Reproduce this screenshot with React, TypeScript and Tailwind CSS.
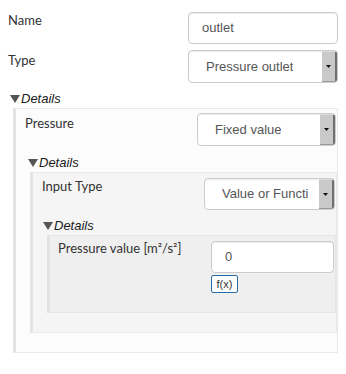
import React from 'react';

const Caret: React.FC = () => (
    <svg width="10" height="8" viewBox="0 0 10 8" className="shrink-0">
        <polygon points="0,0 10,0 5,8" fill="#555" />
    </svg>
);

const TextInput: React.FC<{ value: string; w: string }> = ({ value, w }) => (
    <div className={`${w} flex h-8 items-center rounded border border-[#ccc] bg-white pl-[13px] font-['Liberation_Sans',Arial,sans-serif] text-[13px] text-[#555] shadow-[inset_0_1px_1px_rgba(0,0,0,0.075)]`}>
        {value}
    </div>
);

const Select: React.FC<{ value: string; w: string; h: string }> = ({ value, w, h }) => (
    <div className={`${w} ${h} flex overflow-hidden rounded border border-[#ccc] bg-white font-['Liberation_Sans',Arial,sans-serif] text-[13px] text-[#555] shadow-[inset_0_1px_1px_rgba(0,0,0,0.075)]`}>
        <div className="flex min-w-0 flex-1 items-center pl-[17px] pr-[11px]">
            <div className="overflow-hidden whitespace-nowrap">{value}</div>
        </div>
        <div className="flex w-[15px] items-center justify-center border-r-2 border-b border-t border-r-[#6f6f6f] border-b-[#9a9a9a] border-t-[#dcdcdc] bg-[#c9c9c9]">
            <svg width="5" height="3" viewBox="0 0 5 3">
                <polygon points="0,0 5,0 2.5,3" fill="#111" />
            </svg>
        </div>
    </div>
);

const Header: React.FC = () => (
    <div className="flex h-[15px] items-center gap-px">
        <Caret />
        <span className="font-['Liberation_Sans',Arial,sans-serif] text-[13px] italic leading-[15px] text-[#1a1a1a]">Details</span>
    </div>
);

const Label: React.FC<{ children: React.ReactNode; className?: string }> = ({ children, className = '' }) => (
    <div className={`min-w-0 flex-1 text-[13px] leading-5 text-[#333] ${className}`}>{children}</div>
);

const App: React.FC = () => {
    return (
        <div className="h-[374px] w-[346px] bg-white px-2 pt-[10px] font-['Lato','Liberation_Sans',sans-serif]">
            <div className="flex items-start">
                <Label>Name</Label>
                <div className="mt-[2px]">
                    <TextInput value="outlet" w="w-[150px]" />
                </div>
            </div>
            <div className="mt-[6px] flex items-start">
                <Label>Type</Label>
                <Select value="Pressure outlet" w="w-[150px]" h="h-[33px]" />
            </div>

            {/* level 1 */}
            <div className="ml-[2px] mt-[8px]">
                <Header />
                <div className="ml-[3px] mt-[2px] border border-l-[3px] border-[#e9e9e9] border-l-[#e3e3e3] bg-[#fcfcfc] pb-[19px] pt-[4px]">
                    <div className="flex items-start pl-[9px] pr-px">
                        <Label>Pressure</Label>
                        <Select value="Fixed value" w="w-[139px]" h="h-[33px]" />
                    </div>

                    {/* level 2 */}
                    <div className="ml-[12px] mt-[9px]">
                        <Header />
                        <div className="ml-[2px] mt-[2px] border border-l-[3px] border-[#ebebeb] border-l-[#e4e4e4] bg-[#f5f5f5] pb-[19px] pt-[5px]">
                            <div className="flex items-start pl-[9px] pr-px">
                                <Label className="-mt-[2px]">Input Type</Label>
                                <Select value="Value or Function" w="w-[131px]" h="h-8" />
                            </div>

                            {/* level 3 */}
                            <div className="ml-[10px] mt-[8px]">
                                <Header />
                                <div className="ml-[4px] mt-[2px] border border-l-[3px] border-[#e6e6e6] border-l-[#e2e2e2] bg-[#efefef] pb-[19px] pt-[5px]">
                                    <div className="flex items-start pl-[8px] pr-px">
                                        <Label className="-mt-[3px]">Pressure value [m²/s²]</Label>
                                        <div className="flex w-[123px] flex-col items-start">
                                            <TextInput value="0" w="w-[123px]" />
                                            <button className="mt-[2px] flex h-[18px] w-[27px] items-center justify-center rounded-[2px] border border-[#2e6da4] bg-white font-['Liberation_Sans',Arial,sans-serif] text-[11px] leading-none text-[#333]">
                                                f(x)
                                            </button>
                                        </div>
                                    </div>
                                </div>
                            </div>
                        </div>
                    </div>
                </div>
            </div>
        </div>
    );
};

export default App;
